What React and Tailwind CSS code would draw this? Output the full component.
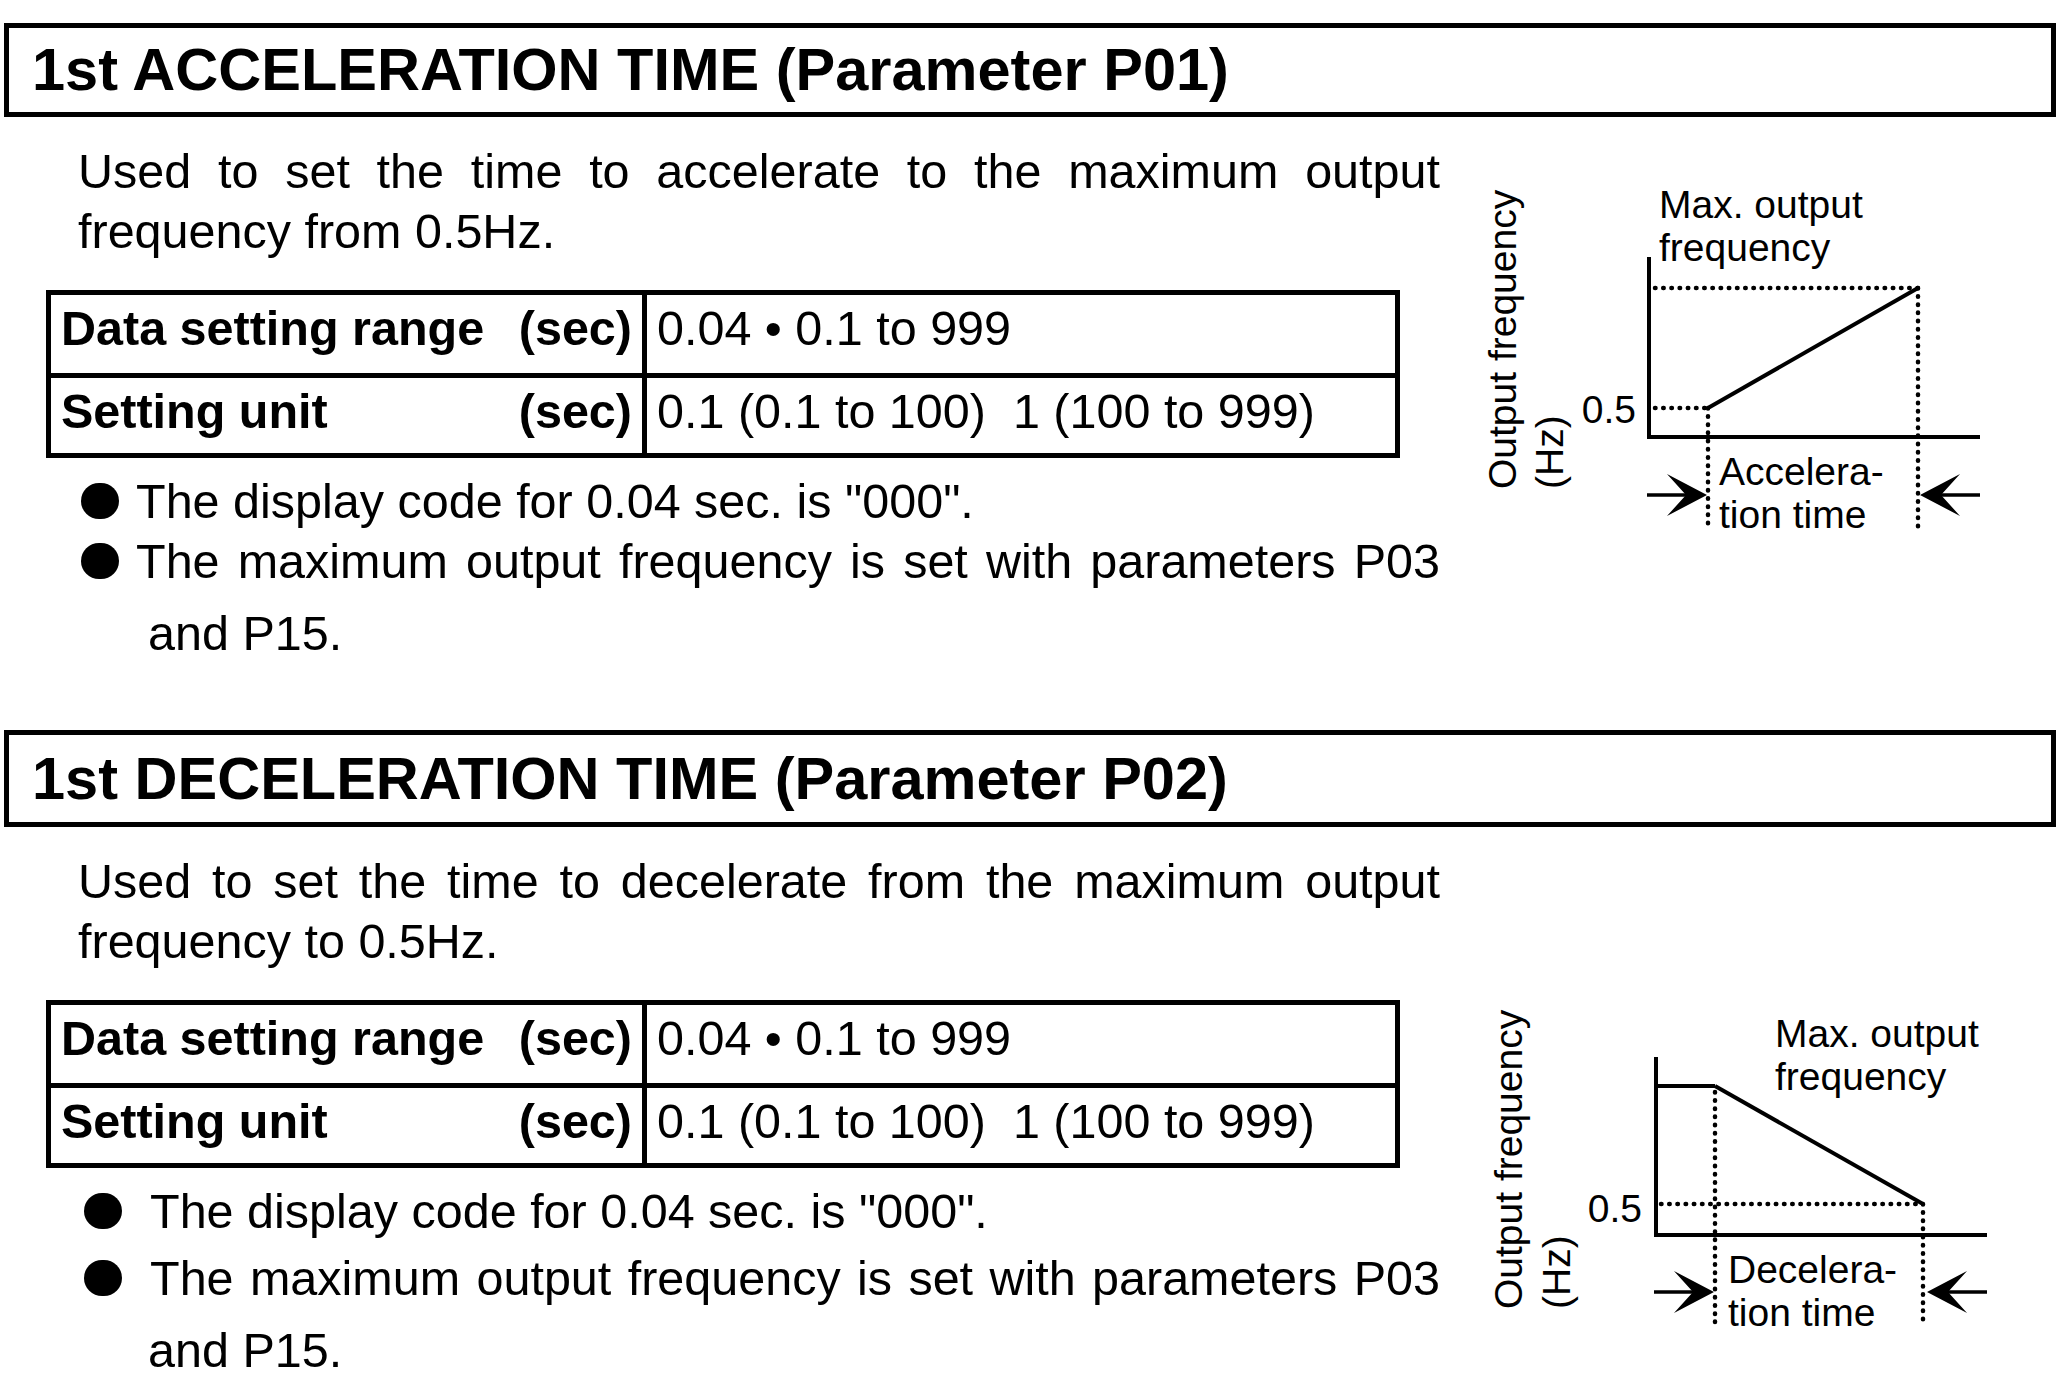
import React from 'react';

const ink = '#000';

// dotted guide line used in both charts
const Dots = (props) => (
  <line {...props} stroke={ink} strokeWidth="4.5" strokeLinecap="round" strokeDasharray="0.5 7.7" />
);

const Solid = ({ w = 4, ...props }) => <line {...props} stroke={ink} strokeWidth={w} />;

const AccelChart = () => (
  <svg className="mt-[53px] shrink-0" width="540" height="390" viewBox="1470 170 540 390">
    <g fontFamily="'Liberation Sans', Arial, sans-serif" fontSize="39" fill={ink}>
      <text x="1516" y="489" transform="rotate(-90 1516 489)">Output frequency</text>
      <text x="1563" y="489" transform="rotate(-90 1563 489)">(Hz)</text>
      <text x="1659" y="218">Max. output</text>
      <text x="1659" y="261">frequency</text>
      <text x="1636" y="423" textAnchor="end">0.5</text>
      <text x="1719" y="485">Accelera-</text>
      <text x="1719" y="528">tion time</text>
    </g>
    <Solid x1="1649" y1="257" x2="1649" y2="439" />
    <Solid x1="1647" y1="437" x2="1980" y2="437" />
    <Dots x1="1655" y1="288" x2="1918" y2="288" />
    <Dots x1="1918" y1="288" x2="1918" y2="530" />
    <Dots x1="1655" y1="408" x2="1708" y2="408" />
    <Dots x1="1708" y1="408" x2="1708" y2="530" />
    <Solid w={4} x1="1708" y1="408" x2="1918" y2="288" />
    {/* time arrows */}
    <Solid w={3.5} x1="1647" y1="495" x2="1690" y2="495" />
    <path d="M1707 495 L1667 474 L1686 495 L1667 516 Z" fill={ink} />
    <Solid w={3.5} x1="1980" y1="495" x2="1937" y2="495" />
    <path d="M1920 495 L1960 474 L1941 495 L1960 516 Z" fill={ink} />
  </svg>
);

const DecelChart = () => (
  <svg className="mt-[163px] shrink-0" width="540" height="390" viewBox="1470 990 540 390">
    <g fontFamily="'Liberation Sans', Arial, sans-serif" fontSize="39" fill={ink}>
      <text x="1522" y="1309" transform="rotate(-90 1522 1309)">Output frequency</text>
      <text x="1570" y="1309" transform="rotate(-90 1570 1309)">(Hz)</text>
      <text x="1775" y="1047">Max. output</text>
      <text x="1775" y="1090">frequency</text>
      <text x="1642" y="1222" textAnchor="end">0.5</text>
      <text x="1728" y="1283">Decelera-</text>
      <text x="1728" y="1326">tion time</text>
    </g>
    <Solid x1="1656" y1="1057" x2="1656" y2="1237" />
    <Solid x1="1654" y1="1235" x2="1987" y2="1235" />
    <Solid x1="1656" y1="1086" x2="1715" y2="1086" />
    <Solid w={4} x1="1715" y1="1086" x2="1923" y2="1204" />
    <Dots x1="1661" y1="1204" x2="1923" y2="1204" />
    <Dots x1="1715" y1="1092" x2="1715" y2="1327" />
    <Dots x1="1923" y1="1204" x2="1923" y2="1325" />
    <Solid w={3.5} x1="1654" y1="1292" x2="1697" y2="1292" />
    <path d="M1714 1292 L1674 1271 L1693 1292 L1674 1313 Z" fill={ink} />
    <Solid w={3.5} x1="1987" y1="1292" x2="1944" y2="1292" />
    <path d="M1927 1292 L1967 1271 L1948 1292 L1967 1313 Z" fill={ink} />
  </svg>
);

const RangeTable = () => (
  <div className="ml-[46px] mt-[29px] w-[1354px] border-[5px] border-black text-[48.5px] leading-[54px]">
    <div className="flex h-[83px] border-b-[5px] border-black">
      <div className="flex w-[596px] shrink-0 justify-between border-r-[5px] border-black px-[10px] pt-[6px] font-bold">
        <span>Data setting range</span>
        <span>(sec)</span>
      </div>
      <div className="pl-[10px] pt-[6px]">0.04 • 0.1 to 999</div>
    </div>
    <div className="flex h-[75px]">
      <div className="flex w-[596px] shrink-0 justify-between border-r-[5px] border-black px-[10px] pt-[6px] font-bold">
        <span>Setting unit</span>
        <span>(sec)</span>
      </div>
      <div className="whitespace-pre pl-[10px] pt-[6px]">0.1 (0.1 to 100)  1 (100 to 999)</div>
    </div>
  </div>
);

const Section = ({ title, intro, titleBox, bulletRow, textGap, secondGap, chart }) => (
  <section>
    <div className={`ml-[4px] flex w-[2052px] items-center border-[5px] border-black pl-[23px] text-[59.5px] font-bold leading-none ${titleBox}`}>
      {title}
    </div>
    <div className="flex">
      <div className="w-[1470px] shrink-0 text-[48.5px] leading-[60px]">
        <p className="ml-[78px] mt-[24px] w-[1362px] text-justify">{intro}</p>
        <RangeTable />
        <div className={`mt-[13px] flex h-[60px] items-center ${bulletRow}`}>
          <span className="h-[36px] w-[38px] shrink-0 rounded-full bg-black" />
          <p className={textGap}>The display code for 0.04 sec. is "000".</p>
        </div>
        <div className={`flex h-[60px] items-center ${bulletRow} ${secondGap}`}>
          <span className="h-[36px] w-[38px] shrink-0 rounded-full bg-black" />
          <p className={`flex-1 text-justify [text-align-last:justify] ${textGap}`}>
            The maximum output frequency is set with parameters P03
          </p>
        </div>
        <p className="mt-[12px] pl-[148px]">and P15.</p>
      </div>
      {chart}
    </div>
  </section>
);

export default function App() {
  return (
    <div className="h-[1380px] w-[2070px] overflow-hidden bg-white pt-[23px] font-['Liberation_Sans',Arial,sans-serif] text-black">
      <Section
        title="1st ACCELERATION TIME (Parameter P01)"
        intro="Used to set the time to accelerate to the maximum output frequency from 0.5Hz."
        titleBox="h-[94px]"
        bulletRow="ml-[81px] w-[1359px]"
        textGap="ml-[17px]"
        secondGap="mt-0"
        chart={<AccelChart />}
      />
      <div className="mt-[67px]">
        <Section
          title="1st DECELERATION TIME (Parameter P02)"
          intro="Used to set the time to decelerate from the maximum output frequency to 0.5Hz."
          titleBox="h-[97px]"
          bulletRow="ml-[84px] w-[1356px]"
          textGap="ml-[28px]"
          secondGap="mt-[7px]"
          chart={<DecelChart />}
        />
      </div>
    </div>
  );
}
